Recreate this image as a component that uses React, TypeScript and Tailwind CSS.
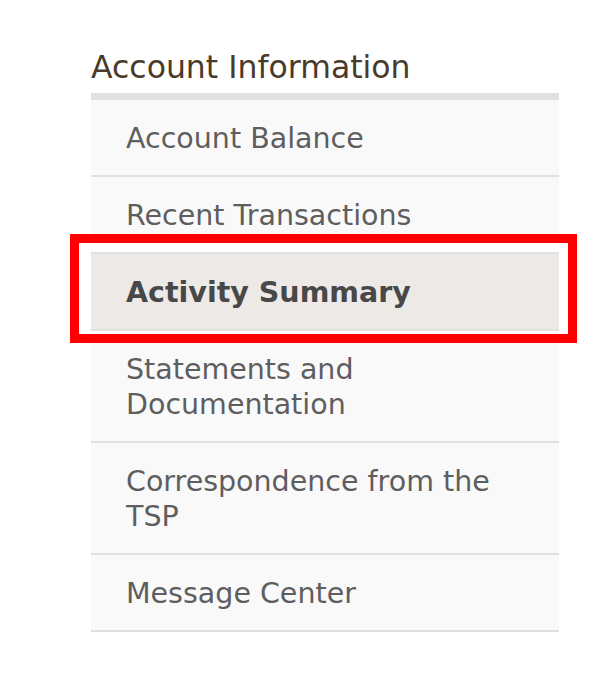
const items = [
  "Account Balance",
  "Recent Transactions",
  "Activity Summary",
  "Statements and Documentation",
  "Correspondence from the TSP",
  "Message Center",
];

const ACTIVE = "Activity Summary";

export default function App() {
  return (
    <div className="min-h-screen bg-white pl-[91px] pt-[48px] font-['DejaVu_Sans',Verdana,sans-serif]">
      <nav className="w-[468px]">
        <h2 className="mb-[7px] text-[31.5px] leading-[38px] text-[#4a3a2a]">
          Account Information
        </h2>
        <ul className="border-t-[7px] border-[#e0e0e0]">
          {items.map((label) =>
            label === ACTIVE ? (
              <li key={label} className="relative -mt-[2px]">
                {/* red highlight box drawn over the neighbouring rows */}
                <div className="absolute -left-[21px] -right-[18px] -top-[18px] -bottom-[12px] border-[9px] border-[#ff0000] bg-white" />
                <div className="relative border-y-2 border-[#e0e0e0] bg-[#ede9e6] pt-[21px] pb-[19px] pl-[35px] pr-[20px] text-[28.5px] font-bold leading-[35px] text-[#484848]">
                  {label}
                </div>
              </li>
            ) : (
              <li
                key={label}
                className="border-b-2 border-[#e0e0e0] bg-[#f9f9f9] pt-[21px] pb-[19px] pl-[35px] pr-[20px] text-[28.5px] leading-[35px] text-[#5e5e5e]"
              >
                {label}
              </li>
            ),
          )}
        </ul>
      </nav>
    </div>
  );
}
